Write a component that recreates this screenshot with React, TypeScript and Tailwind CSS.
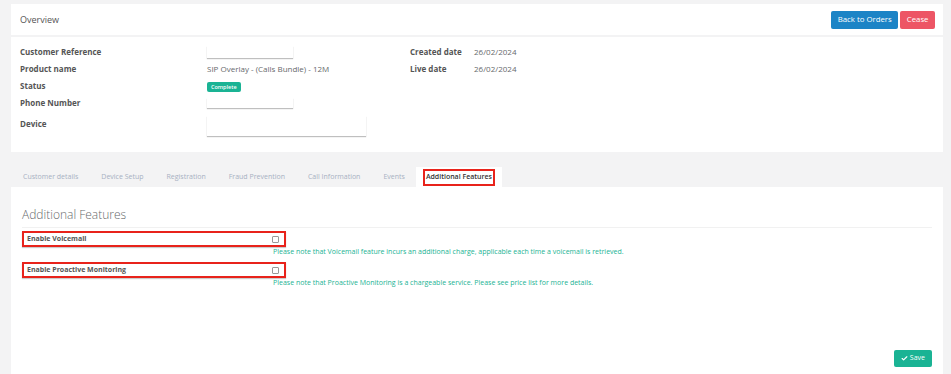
import { Check } from "lucide-react";

const tabs = [
  "Customer details",
  "Device Setup",
  "Registration",
  "Fraud Prevention",
  "Call Information",
  "Events",
];

const features = [
  {
    label: "Enable Voicemail",
    note: "Please note that Voicemail feature incurs an additional charge, applicable each time a voicemail is retrieved.",
  },
  {
    label: "Enable Proactive Monitoring",
    note: "Please note that Proactive Monitoring is a chargeable service. Please see price list for more details.",
  },
];

function BlankField({ className }: { className: string }) {
  return <div className={`bg-white shadow-[0_1px_1px_rgba(0,0,0,0.25)] ${className}`} />;
}

export default function App() {
  return (
    <div
      className="w-[951px] h-[374px] bg-[#f3f3f4] pl-[11px] pr-[8px] pt-[4px] flex flex-col overflow-hidden"
      style={{ fontFamily: '"Open Sans", "Noto Sans", sans-serif' }}
    >
      {/* overview card */}
      <div className="bg-white h-[148px] flex flex-col">
        <div className="h-[33px] flex items-center justify-between pl-[9px] pr-[8px] border-b-2 border-[#f3f3f4]">
          <span className="text-[9px] text-[#555]">Overview</span>
          <div className="flex gap-[2px]">
            <button className="h-[18px] px-[6.5px] rounded-[2px] bg-[#1c84c6] text-white text-[7.8px]">Back to Orders</button>
            <button className="h-[18px] px-[6.5px] rounded-[2px] bg-[#ed5565] text-white text-[7.8px]">Cease</button>
          </div>
        </div>
        <div className="flex pl-[9px] pt-[6px] text-[8px]">
          <div className="w-[390px] grid grid-cols-[187px_1fr] auto-rows-[17px] items-center">
            <span className="font-bold text-[#555]">Customer Reference</span>
            <BlankField className="w-[86px] h-[12px]" />
            <span className="font-bold text-[#555]">Product name</span>
            <span className="text-[#676a6c]">SIP Overlay - (Calls Bundle) - 12M</span>
            <span className="font-bold text-[#555]">Status</span>
            <span>
              <span className="inline-block bg-[#1ab394] text-white text-[5.5px] font-semibold px-[4px] py-[1px] rounded-[2px] leading-[8px]">Complete</span>
            </span>
            <span className="font-bold text-[#555]">Phone Number</span>
            <BlankField className="w-[86px] h-[10px]" />
            <span className="font-bold text-[#555] self-start mt-[7px] leading-[12px]">Device</span>
            <BlankField className="w-[159px] h-[20px] self-start mt-[5px]" />
          </div>
          <div className="grid grid-cols-[64px_1fr] auto-rows-[17px] items-center h-fit">
            <span className="font-bold text-[#555]">Created date</span>
            <span className="text-[#676a6c]">26/02/2024</span>
            <span className="font-bold text-[#555]">Live date</span>
            <span className="text-[#676a6c]">26/02/2024</span>
          </div>
        </div>
      </div>

      {/* tabs */}
      <div className="h-[35px] flex items-end text-[7px]">
        {tabs.map((t) => (
          <div key={t} className="h-[20px] pl-[12px] pr-[11px] flex items-center text-[#a7b1c2]">
            {t}
          </div>
        ))}
        <div className="h-[20px] px-[7px] bg-white flex items-center">
          <span className="border-2 border-[#e8231b] px-[1px] h-[17px] flex items-center text-[#333] font-semibold">
            Additional Features
          </span>
        </div>
      </div>

      {/* content */}
      <div className="flex-1 bg-white flex flex-col px-[11px] pb-[7px]">
        <div className="pt-[19px] h-[41px] border-b border-[#f1f1f1]">
          <h2 className="text-[12px] font-light text-[#676a6c] leading-[18px]">Additional Features</h2>
        </div>
        <div className="flex flex-col gap-[5px] pt-[3px]">
          {features.map((f) => (
            <div key={f.label} className="flex flex-col">
              <div className="w-[264px] h-[16px] border-2 border-[#e8231b] flex items-center justify-between pl-[3px] pr-[5px] shadow-[0_1px_1px_rgba(0,0,0,0.2)]">
                <span className="text-[7px] font-bold text-[#555]">{f.label}</span>
                <span className="w-[7px] h-[7px] border border-[#999] rounded-[1px] bg-white" />
              </div>
              <div className="pl-[251px] h-[10px] flex items-center text-[7px] text-[#1ab394] whitespace-nowrap">{f.note}</div>
            </div>
          ))}
        </div>
        <div className="mt-auto flex justify-end">
          <button className="h-[17px] px-[7px] rounded-[2px] bg-[#1ab394] text-white text-[7px] flex items-center gap-[2px]">
            <Check size={7} strokeWidth={4} />
            Save
          </button>
        </div>
      </div>
    </div>
  );
}
